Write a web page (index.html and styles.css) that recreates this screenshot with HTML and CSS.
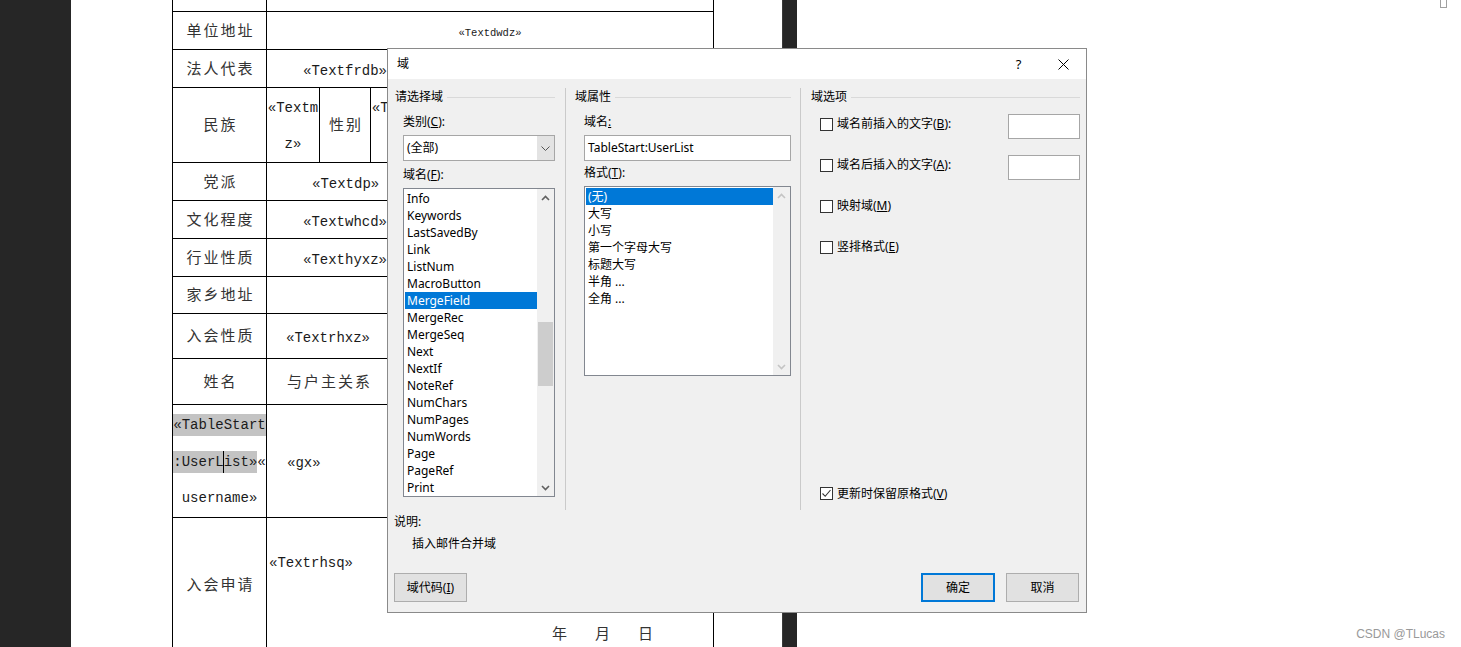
FILE: index.html
```html
<!DOCTYPE html>
<html lang="zh-CN">
<head>
    <meta charset="UTF-8">
    <title>域</title>
    <link rel="stylesheet" href="styles.css">
</head>
<body>
    <div class="sidebar"></div>

    <div class="page">
        <table class="form">
            <colgroup>
                <col class="c1"><col class="c2"><col class="c3"><col class="c4"><col class="c5">
            </colgroup>
            <tr class="r38"><td class="label">单位名称</td><td colspan="4"></td></tr>
            <tr class="r38"><td class="label">单位地址</td><td colspan="4" class="small">«Textdwdz»</td></tr>
            <tr class="r38"><td class="label">法人代表</td><td colspan="4" class="in36">«Textfrdb»</td></tr>
            <tr class="r75">
                <td class="label">民族</td>
                <td class="wrap">«Textmz»</td>
                <td class="label">性别</td>
                <td class="wrap">«Textxb»</td>
                <td class="label">出生年月</td>
            </tr>
            <tr class="r38"><td class="label">党派</td><td colspan="4" class="in45">«Textdp»</td></tr>
            <tr class="r38"><td class="label">文化程度</td><td colspan="4" class="in36">«Textwhcd»</td></tr>
            <tr class="r38"><td class="label">行业性质</td><td colspan="4" class="in36">«Texthyxz»</td></tr>
            <tr class="r37"><td class="label">家乡地址</td><td colspan="4"></td></tr>
            <tr class="r45"><td class="label">入会性质</td><td colspan="4" class="in19">«Textrhxz»</td></tr>
            <tr class="r46"><td class="label">姓名</td><td colspan="4" class="in20 cjk">与户主关系</td></tr>
            <tr class="r112">
                <td class="region">
                    <span class="hl">«TableStart</span><br>
                    <span class="hl">:UserL<span class="caret"></span>ist»</span>«<br>
                    username»
                </td>
                <td colspan="4" class="in20">«gx»</td>
            </tr>
            <tr class="r136">
                <td class="label">入会申请</td>
                <td colspan="4" class="apply">
                    <div class="apply-text">«Textrhsq»</div>
                    <div class="date"><span>年</span><span>月</span><span>日</span></div>
                </td>
            </tr>
        </table>
    </div>

    <div class="gutter"></div>

    <div class="rest">
        <div class="corner"></div>
        <div class="watermark">CSDN @TLucas</div>
    </div>

    <div class="dialog">
        <div class="titlebar">
            <span class="title">域</span>
            <span class="tb-btn">?</span>
            <span class="tb-btn">
                <svg width="11" height="11" viewBox="0 0 11 11"><path d="M0.5 0.5 L10.5 10.5 M10.5 0.5 L0.5 10.5" stroke="#000" stroke-width="1" fill="none"/></svg>
            </span>
        </div>

        <div class="dlg-body">
            <div class="groups">
                <section class="group g-left">
                    <div class="group-head"><span>请选择域</span></div>
                    <div class="field-label first">类别(<u>C</u>):</div>
                    <div class="combo">
                        <span class="combo-value">(全部)</span>
                        <span class="combo-btn">
                            <svg width="9" height="5" viewBox="0 0 9 5"><path d="M0.5 0.5 L4.5 4.5 L8.5 0.5" stroke="#555" stroke-width="1" fill="none"/></svg>
                        </span>
                    </div>
                    <div class="field-label">域名(<u>F</u>):</div>
                    <div class="listbox names">
                        <ul class="items">
                            <li>Info</li>
                            <li>Keywords</li>
                            <li>LastSavedBy</li>
                            <li>Link</li>
                            <li>ListNum</li>
                            <li>MacroButton</li>
                            <li class="selected">MergeField</li>
                            <li>MergeRec</li>
                            <li>MergeSeq</li>
                            <li>Next</li>
                            <li>NextIf</li>
                            <li>NoteRef</li>
                            <li>NumChars</li>
                            <li>NumPages</li>
                            <li>NumWords</li>
                            <li>Page</li>
                            <li>PageRef</li>
                            <li>Print</li>
                        </ul>
                        <div class="scrollbar">
                            <span class="arrow"><svg width="9" height="6" viewBox="0 0 9 6"><path d="M1 5 L4.5 1.5 L8 5" stroke="#606060" stroke-width="1.6" fill="none"/></svg></span>
                            <div class="track"><div class="thumb"></div></div>
                            <span class="arrow"><svg width="9" height="6" viewBox="0 0 9 6"><path d="M1 1 L4.5 4.5 L8 1" stroke="#606060" stroke-width="1.6" fill="none"/></svg></span>
                        </div>
                    </div>
                </section>

                <section class="group g-mid">
                    <div class="group-head"><span>域属性</span></div>
                    <div class="field-label first">域名<u>:</u></div>
                    <div class="textbox">TableStart:UserList</div>
                    <div class="field-label fmt">格式(<u>T</u>):</div>
                    <div class="listbox formats">
                        <ul class="items">
                            <li class="selected">(无)</li>
                            <li>大写</li>
                            <li>小写</li>
                            <li>第一个字母大写</li>
                            <li>标题大写</li>
                            <li>半角 ...</li>
                            <li>全角 ...</li>
                        </ul>
                        <div class="scrollbar disabled">
                            <span class="arrow"><svg width="9" height="6" viewBox="0 0 9 6"><path d="M1 5 L4.5 1.5 L8 5" stroke="#c4c4c4" stroke-width="1.6" fill="none"/></svg></span>
                            <div class="track"></div>
                            <span class="arrow"><svg width="9" height="6" viewBox="0 0 9 6"><path d="M1 1 L4.5 4.5 L8 1" stroke="#c4c4c4" stroke-width="1.6" fill="none"/></svg></span>
                        </div>
                    </div>
                </section>

                <section class="group g-right">
                    <div class="group-head"><span>域选项</span></div>
                    <div class="opt-row first">
                        <span class="check"></span>
                        <span class="opt-label">域名前插入的文字(<u>B</u>):</span>
                        <span class="opt-input"></span>
                    </div>
                    <div class="opt-row">
                        <span class="check"></span>
                        <span class="opt-label">域名后插入的文字(<u>A</u>):</span>
                        <span class="opt-input"></span>
                    </div>
                    <div class="opt-row">
                        <span class="check"></span>
                        <span class="opt-label">映射域(<u>M</u>)</span>
                    </div>
                    <div class="opt-row">
                        <span class="check"></span>
                        <span class="opt-label">竖排格式(<u>E</u>)</span>
                    </div>
                    <div class="opt-row keep">
                        <span class="check checked">
                            <svg width="11" height="11" viewBox="0 0 11 11"><path d="M1.5 5.5 L4.2 8.3 L9.5 2" stroke="#333" stroke-width="1.1" fill="none"/></svg>
                        </span>
                        <span class="opt-label">更新时保留原格式(<u>V</u>)</span>
                    </div>
                </section>
            </div>

            <div class="desc">
                <div>说明:</div>
                <div class="desc-text">插入邮件合并域</div>
            </div>

            <div class="buttons">
                <button class="btn codes">域代码(<u>I</u>)</button>
                <button class="btn ok">确定</button>
                <button class="btn">取消</button>
            </div>
        </div>
    </div>
</body>
</html>
```

FILE: styles.css
```css
* {
    box-sizing: border-box;
}
html, body {
    margin: 0;
}
body {
    width: 1461px;
    height: 647px;
    overflow: hidden;
    display: flex;
    position: relative;
    background-color: #ffffff;
    font-family: "Liberation Mono", "Noto Sans CJK SC", monospace;
}
.sidebar {
    width: 71px;
    flex: none;
    background-color: #262626;
}
.page {
    width: 711px;
    flex: none;
    padding-left: 101px;
}
.gutter {
    width: 15px;
    flex: none;
    background-color: #262626;
    border-left: 1px solid #3a3a3a;
}
.rest {
    flex: 1;
    display: flex;
    flex-direction: column;
    justify-content: space-between;
    align-items: flex-end;
    padding: 0 14px 6px 0;
}
.corner {
    width: 7px;
    height: 8px;
    border: 1px solid #a0a0a0;
    border-top: none;
}
.watermark {
    font-family: "Liberation Sans", Arial, sans-serif;
    font-size: 12px;
    color: #999999;
    margin-right: 2px;
}

/* document table */
.form {
    border-collapse: collapse;
    table-layout: fixed;
    width: 541px;
    margin-top: -27px;
    font-size: 14px;
    color: #1a1a1a;
}
.form col.c1 { width: 94px; }
.form col.c2 { width: 53px; }
.form col.c3 { width: 51px; }
.form col.c4 { width: 53px; }
.form col.c5 { width: 290px; }
.form td {
    border: 1px solid #000000;
    padding: 4px 0 0 0;
    vertical-align: middle;
    white-space: nowrap;
    overflow: hidden;
    line-height: 16px;
}
.r37 { height: 37px; }
.r38 { height: 38px; }
.r45 { height: 45px; }
.r46 { height: 46px; }
.r75 { height: 75px; }
.r112 { height: 112px; }
.r136 { height: 136px; }
.form .label, .cjk {
    font-size: 15px;
    letter-spacing: 2px;
    color: #333333;
}
.form .label {
    text-align: center;
    padding-left: 2px;
}
.form .small {
    font-size: 10.5px;
    text-align: center;
}
.form .wrap {
    white-space: normal;
    word-break: break-all;
    text-align: center;
    line-height: 36px;
    padding-top: 2px;
}
.in19 { padding-left: 19px !important; }
.in20 { padding-left: 20px !important; }
.in36 { padding-left: 36px !important; }
.in45 { padding-left: 45px !important; }
.form .region {
    text-align: center;
    line-height: 36.5px;
    padding-top: 2px;
}
.hl {
    background-color: #c3c3c3;
    padding: 3px 0;
}
.caret {
    border-left: 1px solid #000000;
    margin-left: -1px;
    padding: 3px 0;
}
.form .apply {
    vertical-align: top;
    padding: 0 0 0 2px;
}
.apply-text {
    margin-top: 37px;
}
.date {
    margin-top: 57px;
    padding-left: 283px;
    font-size: 15px;
    color: #333333;
}
.date span {
    margin-right: 28px;
}

/* dialog */
.dialog {
    position: absolute;
    left: 387px;
    top: 48px;
    width: 700px;
    height: 565px;
    border: 1px solid #8a8a8a;
    background-color: #f0f0f0;
    font-family: "Noto Sans", "Noto Sans CJK SC", sans-serif;
    font-size: 12px;
    line-height: 16px;
    color: #000000;
    display: flex;
    flex-direction: column;
}
.dialog u {
    text-decoration-thickness: 1px;
}
.titlebar {
    height: 30px;
    flex: none;
    background-color: #ffffff;
    display: flex;
    align-items: center;
}
.title {
    flex: 1;
    padding-left: 9px;
}
.tb-btn {
    width: 45px;
    height: 30px;
    display: flex;
    align-items: center;
    justify-content: center;
    font-size: 13px;
}
.dlg-body {
    flex: 1;
    padding: 0 6px 0 7px;
    display: flex;
    flex-direction: column;
}
.groups {
    display: flex;
    height: 422px;
    margin-top: 9px;
}
.group {
    display: flex;
    flex-direction: column;
}
.g-left {
    width: 170px;
    padding-right: 10px;
}
.g-mid {
    width: 235px;
    border-left: 1px solid #cacaca;
    padding: 0 9px;
}
.g-right {
    flex: 1;
    border-left: 1px solid #cacaca;
    padding-left: 10px;
}
.group-head {
    display: flex;
    align-items: center;
    gap: 4px;
    padding-top: 1px;
}
.group-head::after {
    content: "";
    flex: 1;
    height: 1px;
    background-color: #d9d9d9;
}
.field-label {
    margin: 6px 0 5px 8px;
}
.field-label.first {
    margin-top: 9px;
}
.g-mid .field-label {
    margin-left: 9px;
}
.g-mid .field-label.fmt {
    margin-top: 4px;
}
.combo {
    margin-left: 8px;
    height: 26px;
    border: 1px solid #a6a6a6;
    background-color: #ffffff;
    display: flex;
}
.combo-value {
    flex: 1;
    padding: 4px 0 0 3px;
}
.combo-btn {
    width: 17px;
    background-color: #e3e3e3;
    display: flex;
    align-items: center;
    justify-content: center;
}
.textbox {
    margin-left: 9px;
    height: 26px;
    border: 1px solid #a6a6a6;
    background-color: #ffffff;
    padding: 4px 0 0 3px;
}
.listbox {
    border: 1px solid #828790;
    background-color: #ffffff;
    display: flex;
}
.listbox.names {
    margin-left: 8px;
    height: 309px;
}
.listbox.formats {
    margin-left: 9px;
    height: 190px;
}
.items {
    flex: 1;
    list-style: none;
    margin: 0;
    padding: 1px 0 0 1px;
}
.items li {
    height: 17px;
    line-height: 17px;
    padding-left: 2px;
    white-space: nowrap;
}
.items li.selected {
    background-color: #0078d7;
    color: #ffffff;
}
.scrollbar {
    width: 17px;
    background-color: #f0f0f0;
    display: flex;
    flex-direction: column;
}
.scrollbar .arrow {
    height: 17px;
    display: flex;
    align-items: center;
    justify-content: center;
}
.track {
    flex: 1;
}
.thumb {
    margin: 116px 1px 0 1px;
    height: 64px;
    background-color: #cdcdcd;
}
.opt-row {
    display: flex;
    align-items: flex-start;
    height: 25px;
    margin: 16px 0 0 9px;
}
.opt-row.first {
    margin-top: 9px;
}
.opt-row.keep {
    margin-top: auto;
    margin-bottom: 9px;
    height: 16px;
}
.check {
    width: 13px;
    height: 13px;
    margin-top: 4px;
    border: 1px solid #333333;
    background-color: #ffffff;
    display: flex;
    align-items: center;
    justify-content: center;
}
.keep .check {
    margin-top: 2px;
}
.opt-label {
    flex: 1;
    margin: 2px 0 0 4px;
}
.keep .opt-label {
    margin-top: 1px;
}
.opt-input {
    width: 72px;
    height: 25px;
    border: 1px solid #a6a6a6;
    background-color: #ffffff;
}
.desc {
    margin: 4px 0 0 -1px;
}
.desc-text {
    margin: 6px 0 0 18px;
}
.buttons {
    display: flex;
    gap: 11px;
    margin: 21px 1px 0 -1px;
}
.btn {
    font: inherit;
    color: #000000;
    width: 73px;
    height: 29px;
    padding: 0;
    border: 1px solid #adadad;
    background-color: #e1e1e1;
}
.btn.codes {
    margin-right: auto;
}
.btn.ok {
    width: 74px;
    border: 2px solid #0078d7;
}
```
